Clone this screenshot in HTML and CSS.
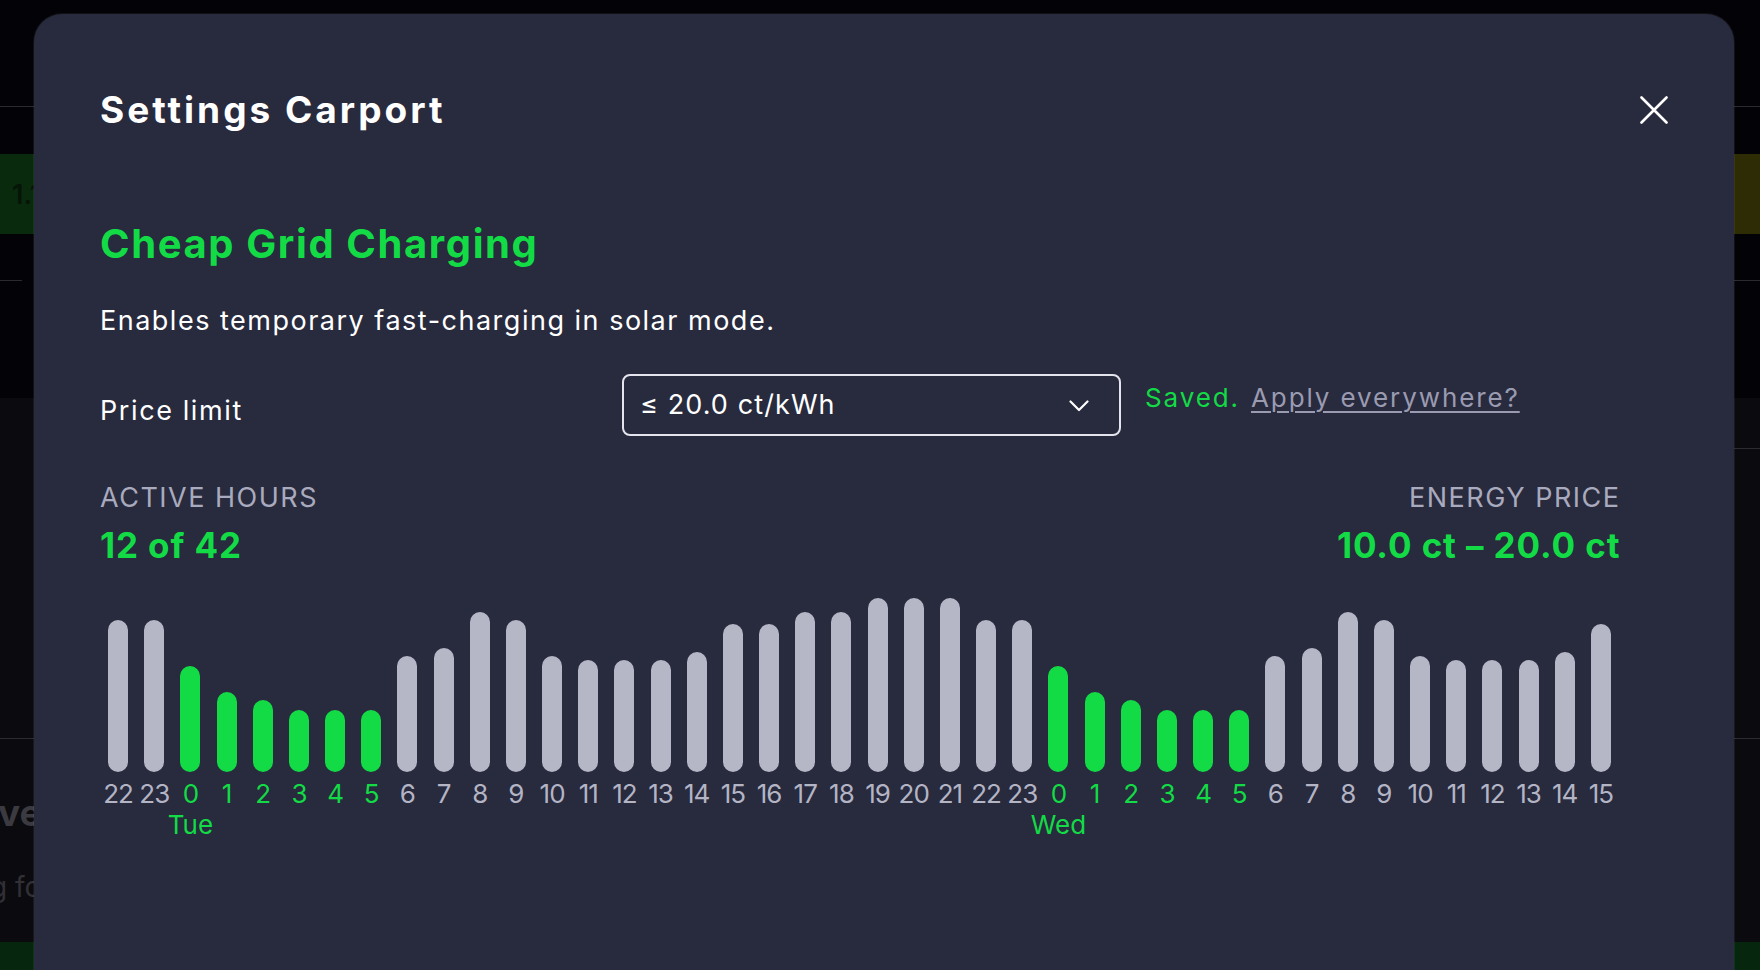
FILE: index.html
```html
<!DOCTYPE html>
<html lang="en">
<head>
<meta charset="utf-8">
<title>Settings Carport</title>
<link rel="stylesheet" href="styles.css">
</head>
<body>
<div class="page">
  <div class="bg-row bg-top"></div>
  <div class="bg-row bg-gap"></div>
  <div class="bg-row bg-bands">
    <div class="band band-green"><span class="band-text">1.1</span></div>
    <div class="band band-yellow"></div>
  </div>
  <div class="bg-row bg-lines">
    <div class="seg seg-left"></div>
    <div class="seg seg-right"></div>
  </div>
  <div class="bg-row bg-dark1"></div>
  <div class="bg-row bg-section">
    <div class="bg-sub"></div>
  </div>
  <div class="bg-row bg-section2">
    <div class="ghost-title">ve</div>
    <div class="ghost-text">g fo</div>
  </div>
  <div class="bg-row bg-greenbar"></div>
</div>

<div class="dialog" role="dialog" aria-labelledby="dlg-title">
  <header class="dialog-header">
    <h1 id="dlg-title" class="dialog-title">Settings Carport</h1>
    <button class="close-btn" aria-label="Close">
      <svg width="28" height="28" viewBox="0 0 28 28" fill="none" stroke="#fff" stroke-width="2.6" stroke-linecap="round">
        <path d="M1.5 1.5 L26.5 26.5 M26.5 1.5 L1.5 26.5"/>
      </svg>
    </button>
  </header>

  <section class="dialog-body">
    <h2 class="section-title">Cheap Grid Charging</h2>
    <p class="section-desc">Enables temporary fast-charging in solar mode.</p>

    <div class="field-row">
      <div class="field-label">Price limit</div>
      <div class="select">
        <span class="select-value">≤ 20.0 ct/kWh</span>
        <svg class="chevron" width="20" height="12" viewBox="0 0 20 12" fill="none" stroke="#fff" stroke-width="2.2" stroke-linecap="round" stroke-linejoin="round">
          <path d="M1.5 1.5 L10 10 L18.5 1.5"/>
        </svg>
      </div>
      <div class="field-status">
        <span class="saved">Saved.</span>
        <a class="apply" href="#">Apply everywhere?</a>
      </div>
    </div>

    <div class="stats">
      <div class="stat">
        <div class="stat-label">ACTIVE HOURS</div>
        <div class="stat-value">12 of 42</div>
      </div>
      <div class="stat stat-right">
        <div class="stat-label">ENERGY PRICE</div>
        <div class="stat-value">10.0 ct – 20.0 ct</div>
      </div>
    </div>

    <div class="chart">
      <div class="col"><div class="bar-area"><div class="bar" style="height:152px"></div></div><div class="hour">22</div></div>
      <div class="col"><div class="bar-area"><div class="bar" style="height:152px"></div></div><div class="hour">23</div></div>
      <div class="col on"><div class="bar-area"><div class="bar" style="height:106px"></div></div><div class="hour">0</div><div class="day">Tue</div></div>
      <div class="col on"><div class="bar-area"><div class="bar" style="height:80px"></div></div><div class="hour">1</div></div>
      <div class="col on"><div class="bar-area"><div class="bar" style="height:72px"></div></div><div class="hour">2</div></div>
      <div class="col on"><div class="bar-area"><div class="bar" style="height:62px"></div></div><div class="hour">3</div></div>
      <div class="col on"><div class="bar-area"><div class="bar" style="height:62px"></div></div><div class="hour">4</div></div>
      <div class="col on"><div class="bar-area"><div class="bar" style="height:62px"></div></div><div class="hour">5</div></div>
      <div class="col"><div class="bar-area"><div class="bar" style="height:116px"></div></div><div class="hour">6</div></div>
      <div class="col"><div class="bar-area"><div class="bar" style="height:124px"></div></div><div class="hour">7</div></div>
      <div class="col"><div class="bar-area"><div class="bar" style="height:160px"></div></div><div class="hour">8</div></div>
      <div class="col"><div class="bar-area"><div class="bar" style="height:152px"></div></div><div class="hour">9</div></div>
      <div class="col"><div class="bar-area"><div class="bar" style="height:116px"></div></div><div class="hour">10</div></div>
      <div class="col"><div class="bar-area"><div class="bar" style="height:112px"></div></div><div class="hour">11</div></div>
      <div class="col"><div class="bar-area"><div class="bar" style="height:112px"></div></div><div class="hour">12</div></div>
      <div class="col"><div class="bar-area"><div class="bar" style="height:112px"></div></div><div class="hour">13</div></div>
      <div class="col"><div class="bar-area"><div class="bar" style="height:120px"></div></div><div class="hour">14</div></div>
      <div class="col"><div class="bar-area"><div class="bar" style="height:148px"></div></div><div class="hour">15</div></div>
      <div class="col"><div class="bar-area"><div class="bar" style="height:148px"></div></div><div class="hour">16</div></div>
      <div class="col"><div class="bar-area"><div class="bar" style="height:160px"></div></div><div class="hour">17</div></div>
      <div class="col"><div class="bar-area"><div class="bar" style="height:160px"></div></div><div class="hour">18</div></div>
      <div class="col"><div class="bar-area"><div class="bar" style="height:174px"></div></div><div class="hour">19</div></div>
      <div class="col"><div class="bar-area"><div class="bar" style="height:174px"></div></div><div class="hour">20</div></div>
      <div class="col"><div class="bar-area"><div class="bar" style="height:174px"></div></div><div class="hour">21</div></div>
      <div class="col"><div class="bar-area"><div class="bar" style="height:152px"></div></div><div class="hour">22</div></div>
      <div class="col"><div class="bar-area"><div class="bar" style="height:152px"></div></div><div class="hour">23</div></div>
      <div class="col on"><div class="bar-area"><div class="bar" style="height:106px"></div></div><div class="hour">0</div><div class="day">Wed</div></div>
      <div class="col on"><div class="bar-area"><div class="bar" style="height:80px"></div></div><div class="hour">1</div></div>
      <div class="col on"><div class="bar-area"><div class="bar" style="height:72px"></div></div><div class="hour">2</div></div>
      <div class="col on"><div class="bar-area"><div class="bar" style="height:62px"></div></div><div class="hour">3</div></div>
      <div class="col on"><div class="bar-area"><div class="bar" style="height:62px"></div></div><div class="hour">4</div></div>
      <div class="col on"><div class="bar-area"><div class="bar" style="height:62px"></div></div><div class="hour">5</div></div>
      <div class="col"><div class="bar-area"><div class="bar" style="height:116px"></div></div><div class="hour">6</div></div>
      <div class="col"><div class="bar-area"><div class="bar" style="height:124px"></div></div><div class="hour">7</div></div>
      <div class="col"><div class="bar-area"><div class="bar" style="height:160px"></div></div><div class="hour">8</div></div>
      <div class="col"><div class="bar-area"><div class="bar" style="height:152px"></div></div><div class="hour">9</div></div>
      <div class="col"><div class="bar-area"><div class="bar" style="height:116px"></div></div><div class="hour">10</div></div>
      <div class="col"><div class="bar-area"><div class="bar" style="height:112px"></div></div><div class="hour">11</div></div>
      <div class="col"><div class="bar-area"><div class="bar" style="height:112px"></div></div><div class="hour">12</div></div>
      <div class="col"><div class="bar-area"><div class="bar" style="height:112px"></div></div><div class="hour">13</div></div>
      <div class="col"><div class="bar-area"><div class="bar" style="height:120px"></div></div><div class="hour">14</div></div>
      <div class="col"><div class="bar-area"><div class="bar" style="height:148px"></div></div><div class="hour">15</div></div>
    </div>
  </section>
</div>
</body>
</html>
```

FILE: styles.css
```css
* { box-sizing: border-box; }

html, body {
  margin: 0;
  padding: 0;
  width: 1760px;
  height: 970px;
  overflow: hidden;
  background: #020207;
  font-family: "Inter", "Noto Sans", sans-serif;
}

/* ---------- background page (behind the modal) ---------- */
.page {
  display: flex;
  flex-direction: column;
  width: 1760px;
  height: 970px;
  overflow: hidden;
}
.bg-row { width: 100%; }
.bg-top { height: 107px; border-bottom: 1px solid #2a2a30; }
.bg-gap { height: 47px; }
.bg-bands { height: 80px; display: flex; }
.band { flex: 1; display: flex; align-items: center; }
.band-green { background: #0a2a0e; }
.band-yellow { background: #2e2c05; }
.band-text {
  padding-left: 12px;
  font-weight: 600;
  font-size: 27px;
  color: #061507;
}
.bg-lines { height: 47px; display: flex; justify-content: space-between; }
.seg { height: 47px; border-bottom: 1px solid #2a2a30; }
.seg-left { width: 22px; }
.seg-right { width: 60px; }
.bg-dark1 { height: 117px; }
.bg-section {
  height: 341px;
  background: #0b0a0e;
  border-bottom: 1px solid #2a2a30;
  display: flex;
  justify-content: flex-end;
}
.bg-sub { width: 60px; height: 51px; border-bottom: 1px solid #2a2a30; }
.bg-section2 {
  height: 203px;
  background: #0b0a0e;
  padding-top: 52px;
}
.ghost-title {
  margin-left: -2px;
  font-weight: 700;
  font-size: 37px;
  line-height: 44px;
  color: #3a3a40;
}
.ghost-text {
  margin-top: 34px;
  margin-left: -10px;
  font-size: 28px;
  line-height: 36px;
  color: #303036;
  white-space: nowrap;
}
.bg-greenbar { flex: 1; background: #06270e; }

/* ---------- modal dialog ---------- */
.dialog {
  position: absolute;
  top: 14px;
  left: 34px;
  width: 1700px;
  height: 1000px;
  background: #282a3e;
  border-radius: 28px;
  box-shadow: 0 0 0 1px rgba(255, 255, 255, 0.06);
  padding: 74px 66px 0 66px;
  color: #fff;
}

.dialog-header {
  display: flex;
  align-items: center;
  justify-content: space-between;
  height: 44px;
}
.dialog-title {
  margin: 0;
  font-size: 37px;
  line-height: 44px;
  font-weight: 700;
  letter-spacing: 3px;
  color: #ffffff;
}
.close-btn {
  width: 28px;
  height: 28px;
  padding: 0;
  border: 0;
  background: none;
  display: flex;
}

.dialog-body {
  padding-right: 49px;
}

.section-title {
  margin: 88px 0 0 0;
  font-size: 40px;
  line-height: 48px;
  font-weight: 700;
  letter-spacing: 1.6px;
  color: #12db45;
}
.section-desc {
  margin: 35px 0 0 0;
  font-size: 27px;
  line-height: 36px;
  letter-spacing: 1.5px;
  color: #ffffff;
}

.field-row {
  margin-top: 35px;
  display: flex;
  align-items: flex-start;
}
.field-label {
  width: 522px;
  margin-top: 19px;
  font-size: 27px;
  line-height: 36px;
  letter-spacing: 1.6px;
}
.select {
  width: 499px;
  height: 62px;
  border: 2px solid #e4e4ec;
  border-radius: 8px;
  display: flex;
  align-items: center;
  justify-content: space-between;
  padding: 0 30px 0 16px;
}
.select-value {
  font-size: 27px;
  line-height: 36px;
  letter-spacing: 1.1px;
}
.chevron { margin-top: 2px; }
.field-status {
  margin-left: 24px;
  margin-top: 8px;
  font-size: 26px;
  line-height: 32px;
  letter-spacing: 1.9px;
  display: flex;
  gap: 11px;
}
.saved { color: #12db45; }
.apply {
  color: #9a9bb0;
  text-decoration: underline;
  text-underline-offset: 4px;
  text-decoration-thickness: 2px;
}

.stats {
  margin-top: 44px;
  display: flex;
  justify-content: space-between;
}
.stat-right { text-align: right; }
.stat-label {
  font-size: 27px;
  line-height: 36px;
  color: #a9aabd;
  letter-spacing: 1.5px;
}
.stat-right .stat-label,
.stat-right .stat-value { margin-right: -1.5px; }
.stat-value {
  margin-top: 7px;
  font-size: 35px;
  line-height: 44px;
  font-weight: 700;
  letter-spacing: 0.9px;
  color: #12db45;
}

.chart {
  margin-top: 31px;
  display: grid;
  grid-template-columns: repeat(42, 1fr);
}
.col {
  display: flex;
  flex-direction: column;
  align-items: center;
  min-width: 0;
}
.bar-area {
  height: 174px;
  display: flex;
  align-items: flex-end;
}
.bar {
  width: 20px;
  border-radius: 10px;
  background: #b5b6c6;
}
.col.on .bar { background: #12db45; }
.hour {
  margin-top: 6px;
  font-size: 26px;
  line-height: 31px;
  color: #b3b4c4;
  white-space: nowrap;
  letter-spacing: -1px;
}
.col.on .hour { color: #12db45; }
.day {
  font-size: 26px;
  line-height: 31px;
  color: #12db45;
  white-space: nowrap;
}
```
